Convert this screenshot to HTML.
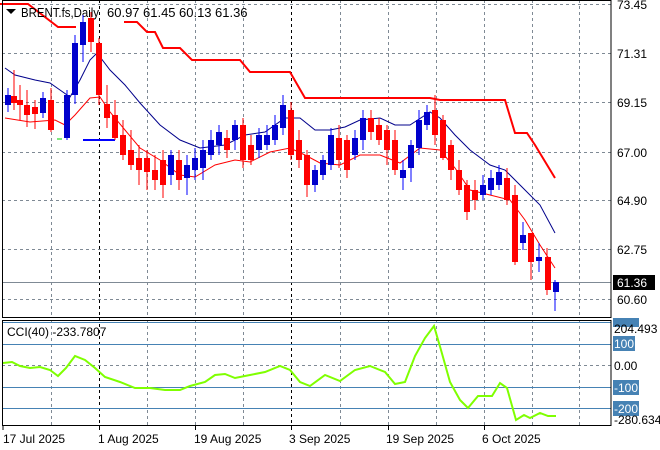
<!DOCTYPE html>
<html><head><meta charset="utf-8"><style>
html,body{margin:0;padding:0;background:#fff;}
svg{display:block;font-family:"Liberation Sans",sans-serif;}
</style></head><body>
<svg width="660" height="450" viewBox="0 0 660 450" xmlns="http://www.w3.org/2000/svg">
<rect width="660" height="450" fill="#fff"/>
<g stroke="#7f8a95" stroke-width="1" stroke-dasharray="3,3" fill="none">
<line x1="2" y1="4.5" x2="611" y2="4.5"/><line x1="2" y1="53.5" x2="611" y2="53.5"/><line x1="2" y1="102.5" x2="611" y2="102.5"/><line x1="2" y1="152.5" x2="611" y2="152.5"/><line x1="2" y1="200.5" x2="611" y2="200.5"/><line x1="2" y1="249.5" x2="611" y2="249.5"/><line x1="2" y1="299.5" x2="611" y2="299.5"/>
<line x1="51.5" y1="0" x2="51.5" y2="318"/><line x1="147.5" y1="0" x2="147.5" y2="318"/><line x1="195.5" y1="0" x2="195.5" y2="318"/><line x1="243.5" y1="0" x2="243.5" y2="318"/><line x1="340.5" y1="0" x2="340.5" y2="318"/><line x1="388.5" y1="0" x2="388.5" y2="318"/><line x1="436.5" y1="0" x2="436.5" y2="318"/><line x1="484.5" y1="0" x2="484.5" y2="318"/><line x1="532.5" y1="0" x2="532.5" y2="318"/><line x1="579.5" y1="0" x2="579.5" y2="318"/>
<line x1="51.5" y1="320" x2="51.5" y2="426"/><line x1="147.5" y1="320" x2="147.5" y2="426"/><line x1="195.5" y1="320" x2="195.5" y2="426"/><line x1="243.5" y1="320" x2="243.5" y2="426"/><line x1="340.5" y1="320" x2="340.5" y2="426"/><line x1="388.5" y1="320" x2="388.5" y2="426"/><line x1="436.5" y1="320" x2="436.5" y2="426"/><line x1="484.5" y1="320" x2="484.5" y2="426"/><line x1="532.5" y1="320" x2="532.5" y2="426"/><line x1="579.5" y1="320" x2="579.5" y2="426"/>
<line x1="2" y1="365.5" x2="611" y2="365.5"/>
</g>
<g stroke="#000" stroke-width="1" stroke-dasharray="3,3"><line x1="99.5" y1="0" x2="99.5" y2="426"/><line x1="291.5" y1="0" x2="291.5" y2="426"/></g>
<line x1="2" y1="282.5" x2="611" y2="282.5" stroke="#7f8a95"/>
<g stroke="#4682b4" stroke-width="1"><line x1="2" y1="322.5" x2="611" y2="322.5"/><line x1="2" y1="344.5" x2="611" y2="344.5"/><line x1="2" y1="387.5" x2="611" y2="387.5"/><line x1="2" y1="408.5" x2="611" y2="408.5"/></g>
<polyline fill="none" stroke="#f00" stroke-width="2" points="0,4 28,4 58,27 76,27"/>
<polyline fill="none" stroke="#f00" stroke-width="2" points="124,22 137,22 147,32 155,32 163,48 180,48 192,60 240,60 250,72 290,72 305,98 430,98 440,100 505,100 515,133 527,133 535,145 555,178"/>
<polyline fill="none" stroke="#00008b" stroke-width="1" points="5,68 15,75 35,80 50,83 60,90 70,97 80,80 90,60 97,53 110,70 125,85 140,103 160,125 180,140 200,148 225,145 245,135 265,132 285,118 300,118 315,130 330,130 345,127 360,120 380,118 395,125 410,125 430,112 440,118 455,135 470,150 490,165 505,170 520,185 540,205 555,233"/>
<polyline fill="none" stroke="#f00" stroke-width="1" points="5,118 30,122 55,120 65,125 75,115 90,98 100,97 110,112 125,130 140,148 160,160 180,175 195,177 215,165 235,160 250,162 270,152 290,148 305,155 320,163 340,165 360,155 380,155 400,163 420,148 440,150 455,168 470,190 490,195 510,200 525,220 540,245 555,268"/>
<line x1="83" y1="140" x2="115" y2="140" stroke="#00f" stroke-width="2"/>
<line x1="57" y1="139" x2="62" y2="139" stroke="#0c0" stroke-width="1"/>
<polyline fill="none" stroke="#7fff00" stroke-width="2" points="3,363 12,362 20,366 30,368 40,367 50,370 58,376 66,368 75,356 85,360 95,368 105,377 120,382 135,388 150,388 165,390 180,390 190,386 205,382 215,375 225,374 235,378 250,375 265,372 280,366 290,370 300,382 310,386 325,375 340,381 355,370 370,366 385,372 395,384 405,382 415,356 425,338 434,326 441,350 450,382 460,400 468,408 478,396 492,396 500,383 507,388 516,420 524,415 530,418 540,413 548,416 556,416"/>
<g stroke="#000" stroke-width="1" fill="none"><rect x="2.5" y="0.5" width="608.5" height="317"/><rect x="2.5" y="320.5" width="608.5" height="105"/></g>
<g stroke="#000"><line x1="3" y1="426" x2="3" y2="430"/><line x1="99.5" y1="426" x2="99.5" y2="430"/><line x1="195.5" y1="426" x2="195.5" y2="430"/><line x1="291.5" y1="426" x2="291.5" y2="430"/><line x1="388.5" y1="426" x2="388.5" y2="430"/><line x1="484.5" y1="426" x2="484.5" y2="430"/></g>
<g font-size="12" fill="#000">
<text x="617" y="9">73.45</text><text x="617" y="58">71.31</text><text x="617" y="107">69.15</text><text x="617" y="157">67.00</text><text x="617" y="205">64.90</text><text x="617" y="254">62.75</text><text x="617" y="304">60.60</text>
</g>
<rect x="613" y="275" width="42" height="15" fill="#000"/>
<text x="617" y="287" font-size="12" fill="#fff">61.36</text>
<rect x="613" y="318" width="26" height="9" fill="#4682b4"/>
<rect x="613" y="336" width="22" height="15" fill="#4682b4"/><text x="614" y="348" font-size="12" fill="#fff">100</text>
<text x="614" y="370" font-size="12">0.00</text>
<rect x="613" y="380" width="26" height="15" fill="#4682b4"/><text x="614" y="392" font-size="12" fill="#fff">-100</text>
<rect x="613" y="401" width="26" height="15" fill="#4682b4"/><text x="614" y="413" font-size="12" fill="#fff">-200</text>
<text x="614" y="333" font-size="12">204.493</text>
<text x="614" y="424" font-size="12">-280.634</text>
<polygon points="6,9 16,9 11,14" fill="#000"/>
<g font-size="13" fill="#000">
<text x="21" y="17" textLength="78" lengthAdjust="spacingAndGlyphs">BRENT.fs,Daily</text>
<text x="107" y="17">60.97</text><text x="143" y="17">61.45</text><text x="179" y="17">60.13</text><text x="215" y="17">61.36</text>
</g>
<text x="7" y="336" font-size="12">CCI(40) -233.7807</text>
<g font-size="12"><text x="3" y="443">17 Jul 2025</text><text x="98" y="443">1 Aug 2025</text><text x="194" y="443">19 Aug 2025</text><text x="289" y="443">3 Sep 2025</text><text x="386" y="443">19 Sep 2025</text><text x="482" y="443">6 Oct 2025</text></g>
<g stroke-width="1">
<line x1="8" y1="88" x2="8" y2="112" stroke="#00f"/><rect x="5" y="95" width="6" height="10" fill="#00c"/>
<line x1="14" y1="70" x2="14" y2="110" stroke="#f00"/><rect x="11" y="96" width="6" height="7" fill="#f00"/>
<line x1="20" y1="85" x2="20" y2="120" stroke="#f00"/><rect x="17" y="100" width="6" height="5" fill="#f00"/>
<line x1="27" y1="90" x2="27" y2="127" stroke="#f00"/><rect x="24" y="105" width="6" height="10" fill="#f00"/>
<line x1="35" y1="100" x2="35" y2="129" stroke="#f00"/><rect x="32" y="107" width="6" height="7" fill="#f00"/>
<line x1="43" y1="92" x2="43" y2="118" stroke="#00f"/><rect x="40" y="98" width="6" height="15" fill="#00c"/>
<line x1="51" y1="88" x2="51" y2="132" stroke="#f00"/><rect x="48" y="100" width="6" height="30" fill="#f00"/>
<line x1="67" y1="90" x2="67" y2="140" stroke="#00f"/><rect x="64" y="95" width="6" height="43" fill="#00c"/>
<line x1="75" y1="35" x2="75" y2="104" stroke="#00f"/><rect x="72" y="43" width="6" height="52" fill="#00c"/>
<line x1="83" y1="15" x2="83" y2="62" stroke="#00f"/><rect x="80" y="22" width="6" height="23" fill="#00c"/>
<line x1="91" y1="12" x2="91" y2="52" stroke="#f00"/><rect x="88" y="18" width="6" height="24" fill="#f00"/>
<line x1="99" y1="38" x2="99" y2="105" stroke="#f00"/><rect x="96" y="43" width="6" height="52" fill="#f00"/>
<line x1="107" y1="85" x2="107" y2="128" stroke="#f00"/><rect x="104" y="104" width="6" height="14" fill="#f00"/>
<line x1="115" y1="100" x2="115" y2="140" stroke="#f00"/><rect x="112" y="115" width="6" height="23" fill="#f00"/>
<line x1="123" y1="120" x2="123" y2="160" stroke="#f00"/><rect x="120" y="135" width="6" height="20" fill="#f00"/>
<line x1="131" y1="130" x2="131" y2="170" stroke="#f00"/><rect x="128" y="150" width="6" height="15" fill="#f00"/>
<line x1="139" y1="145" x2="139" y2="185" stroke="#f00"/><rect x="136" y="158" width="6" height="12" fill="#f00"/>
<line x1="147" y1="150" x2="147" y2="190" stroke="#f00"/><rect x="144" y="158" width="6" height="14" fill="#f00"/>
<line x1="155" y1="155" x2="155" y2="190" stroke="#f00"/><rect x="152" y="170" width="6" height="10" fill="#f00"/>
<line x1="163" y1="150" x2="163" y2="198" stroke="#f00"/><rect x="160" y="160" width="6" height="25" fill="#f00"/>
<line x1="171" y1="150" x2="171" y2="185" stroke="#00f"/><rect x="168" y="155" width="6" height="20" fill="#00c"/>
<line x1="179" y1="150" x2="179" y2="190" stroke="#f00"/><rect x="176" y="160" width="6" height="20" fill="#f00"/>
<line x1="187" y1="155" x2="187" y2="195" stroke="#00f"/><rect x="184" y="165" width="6" height="13" fill="#00c"/>
<line x1="195" y1="148" x2="195" y2="180" stroke="#00f"/><rect x="192" y="158" width="6" height="12" fill="#00c"/>
<line x1="203" y1="140" x2="203" y2="180" stroke="#00f"/><rect x="200" y="150" width="6" height="18" fill="#00c"/>
<line x1="211" y1="130" x2="211" y2="160" stroke="#00f"/><rect x="208" y="140" width="6" height="15" fill="#00c"/>
<line x1="219" y1="125" x2="219" y2="155" stroke="#00f"/><rect x="216" y="132" width="6" height="13" fill="#00c"/>
<line x1="227" y1="130" x2="227" y2="158" stroke="#f00"/><rect x="224" y="138" width="6" height="12" fill="#f00"/>
<line x1="235" y1="120" x2="235" y2="150" stroke="#00f"/><rect x="232" y="125" width="6" height="15" fill="#00c"/>
<line x1="243" y1="118" x2="243" y2="168" stroke="#f00"/><rect x="240" y="125" width="6" height="35" fill="#f00"/>
<line x1="251" y1="135" x2="251" y2="165" stroke="#f00"/><rect x="248" y="145" width="6" height="15" fill="#f00"/>
<line x1="259" y1="128" x2="259" y2="158" stroke="#00f"/><rect x="256" y="135" width="6" height="15" fill="#00c"/>
<line x1="267" y1="125" x2="267" y2="150" stroke="#00f"/><rect x="264" y="135" width="6" height="10" fill="#00c"/>
<line x1="275" y1="115" x2="275" y2="145" stroke="#00f"/><rect x="272" y="125" width="6" height="15" fill="#00c"/>
<line x1="283" y1="95" x2="283" y2="135" stroke="#00f"/><rect x="280" y="105" width="6" height="23" fill="#00c"/>
<line x1="291" y1="102" x2="291" y2="160" stroke="#f00"/><rect x="288" y="110" width="6" height="45" fill="#f00"/>
<line x1="299" y1="130" x2="299" y2="168" stroke="#f00"/><rect x="296" y="140" width="6" height="20" fill="#f00"/>
<line x1="307" y1="150" x2="307" y2="197" stroke="#f00"/><rect x="304" y="155" width="6" height="30" fill="#f00"/>
<line x1="315" y1="165" x2="315" y2="192" stroke="#00f"/><rect x="312" y="170" width="6" height="15" fill="#00c"/>
<line x1="323" y1="155" x2="323" y2="180" stroke="#00f"/><rect x="320" y="160" width="6" height="15" fill="#00c"/>
<line x1="331" y1="128" x2="331" y2="170" stroke="#00f"/><rect x="328" y="135" width="6" height="30" fill="#00c"/>
<line x1="339" y1="125" x2="339" y2="168" stroke="#f00"/><rect x="336" y="138" width="6" height="22" fill="#f00"/>
<line x1="347" y1="135" x2="347" y2="178" stroke="#f00"/><rect x="344" y="140" width="6" height="30" fill="#f00"/>
<line x1="355" y1="130" x2="355" y2="160" stroke="#00f"/><rect x="352" y="138" width="6" height="17" fill="#00c"/>
<line x1="363" y1="110" x2="363" y2="150" stroke="#00f"/><rect x="360" y="118" width="6" height="22" fill="#00c"/>
<line x1="371" y1="110" x2="371" y2="140" stroke="#f00"/><rect x="368" y="118" width="6" height="14" fill="#f00"/>
<line x1="379" y1="118" x2="379" y2="145" stroke="#f00"/><rect x="376" y="125" width="6" height="15" fill="#f00"/>
<line x1="387" y1="125" x2="387" y2="165" stroke="#f00"/><rect x="384" y="130" width="6" height="20" fill="#f00"/>
<line x1="395" y1="130" x2="395" y2="175" stroke="#f00"/><rect x="392" y="140" width="6" height="30" fill="#f00"/>
<line x1="403" y1="160" x2="403" y2="190" stroke="#00f"/><rect x="400" y="170" width="6" height="8" fill="#00c"/>
<line x1="411" y1="140" x2="411" y2="182" stroke="#00f"/><rect x="408" y="145" width="6" height="23" fill="#00c"/>
<line x1="419" y1="110" x2="419" y2="155" stroke="#00f"/><rect x="416" y="120" width="6" height="28" fill="#00c"/>
<line x1="427" y1="105" x2="427" y2="130" stroke="#00f"/><rect x="424" y="112" width="6" height="13" fill="#00c"/>
<line x1="435" y1="95" x2="435" y2="145" stroke="#f00"/><rect x="432" y="110" width="6" height="25" fill="#f00"/>
<line x1="443" y1="115" x2="443" y2="160" stroke="#f00"/><rect x="440" y="120" width="6" height="38" fill="#f00"/>
<line x1="451" y1="140" x2="451" y2="180" stroke="#f00"/><rect x="448" y="145" width="6" height="25" fill="#f00"/>
<line x1="459" y1="160" x2="459" y2="195" stroke="#f00"/><rect x="456" y="170" width="6" height="20" fill="#f00"/>
<line x1="467" y1="180" x2="467" y2="220" stroke="#f00"/><rect x="464" y="185" width="6" height="27" fill="#f00"/>
<line x1="475" y1="180" x2="475" y2="210" stroke="#f00"/><rect x="472" y="190" width="6" height="10" fill="#f00"/>
<line x1="483" y1="175" x2="483" y2="200" stroke="#00f"/><rect x="480" y="185" width="6" height="10" fill="#00c"/>
<line x1="491" y1="170" x2="491" y2="195" stroke="#00f"/><rect x="488" y="178" width="6" height="12" fill="#00c"/>
<line x1="499" y1="165" x2="499" y2="190" stroke="#00f"/><rect x="496" y="172" width="6" height="13" fill="#00c"/>
<line x1="507" y1="168" x2="507" y2="205" stroke="#f00"/><rect x="504" y="178" width="6" height="22" fill="#f00"/>
<line x1="515" y1="185" x2="515" y2="265" stroke="#f00"/><rect x="512" y="195" width="6" height="67" fill="#f00"/>
<line x1="523" y1="222" x2="523" y2="250" stroke="#00f"/><rect x="520" y="235" width="6" height="8" fill="#00c"/>
<line x1="531" y1="243" x2="531" y2="280" stroke="#f00"/><rect x="528" y="233" width="6" height="29" fill="#f00"/>
<line x1="539" y1="243" x2="539" y2="272" stroke="#00f"/><rect x="536" y="257" width="6" height="4" fill="#00c"/>
<line x1="547" y1="248" x2="547" y2="295" stroke="#f00"/><rect x="545" y="257" width="6" height="33" fill="#f00"/>
<line x1="555" y1="280" x2="555" y2="311" stroke="#00f"/><rect x="553" y="282" width="6" height="10" fill="#00c"/>
</g>
</svg>
</body></html>
